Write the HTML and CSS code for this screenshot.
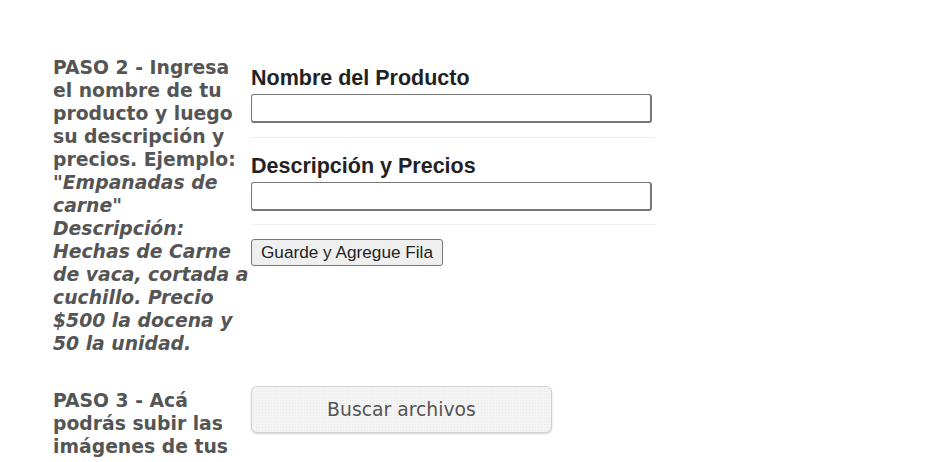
FILE: index.html
```html
<!DOCTYPE html>
<html>
<head>
  <meta charset="UTF-8">
  <title>Carga de productos</title>
  <link rel="stylesheet" href="styles.css">
</head>
<body>

  <div class="step">
    <div class="step-text">
      PASO 2 - Ingresa el nombre de tu producto y luego su descripción y precios. Ejemplo:
      <em>"Empanadas de carne" Descripción: Hechas de Carne de vaca, cortada a cuchillo. Precio $500 la docena y 50 la unidad.</em>
    </div>
    <div class="step-form">
      <label for="prod-name">Nombre del Producto</label>
      <input type="text" id="prod-name">
      <hr>
      <label for="prod-desc">Descripción y Precios</label>
      <input type="text" id="prod-desc">
      <hr class="hr-last">
      <button type="button" class="save-btn">Guarde y Agregue Fila</button>
    </div>
  </div>

  <div class="step step-upload">
    <div class="step-text">
      PASO 3 - Acá podrás subir las imágenes de tus
    </div>
    <div class="step-form">
      <button type="button" class="upload-btn">Buscar archivos</button>
    </div>
  </div>

</body>
</html>
```

FILE: styles.css
```css
/* Base */
* {
  box-sizing: border-box;
}

body {
  margin: 0;
  padding: 56px 0 0 53px;
  background: #fff;
  font-family: "DejaVu Sans", Verdana, sans-serif;
}

/* Step rows */
.step {
  display: grid;
  grid-template-columns: 198px 404px;
}

.step-upload {
  margin-top: 34px;
}

.step-text {
  font-size: 18.8px;
  line-height: 23px;
  font-weight: bold;
  color: #555;
  padding-right: 2px;
}

.step-text em {
  font-style: italic;
}

/* Form column */
.step-form {
  padding-top: 10px;
  font-family: "Liberation Sans", Arial, sans-serif;
}

.step-form label {
  display: block;
  font-size: 21.5px;
  font-weight: bold;
  color: #222;
  line-height: 24px;
  margin-bottom: 4px;
}

.step-form input[type=text] {
  display: block;
  width: 401px;
  height: 29px;
  margin: 0;
  padding: 2px 4px;
  border: 1px solid #767676;
  border-width: 1px 2px 2px 1px;
  border-radius: 3px;
  font-size: 16px;
}

.step-form hr {
  margin: 14px 0 16px;
  border: none;
  border-top: 1px solid #eee;
}

.step-form .hr-last {
  margin: 13px 0 14px;
}

.save-btn {
  font-family: "Liberation Sans", Arial, sans-serif;
  font-size: 17.2px;
  height: 27px;
  padding: 1px 9px;
  background: #efefef;
  color: #222;
  border: 1px solid #767676;
  border-radius: 3px;
}

.upload-btn {
  display: block;
  width: 301px;
  height: 47px;
  margin-top: -13px;
  font-family: "DejaVu Sans", Verdana, sans-serif;
  font-size: 18.8px;
  color: #555;
  background-color: #f4f4f4;
  background-image: radial-gradient(#e9e9e9 0.6px, transparent 0.8px);
  background-size: 3px 3px;
  border: 1px solid #d2d2d2;
  border-radius: 6px;
  box-shadow: 0 1px 2px rgba(0, 0, 0, 0.18);
}
```
